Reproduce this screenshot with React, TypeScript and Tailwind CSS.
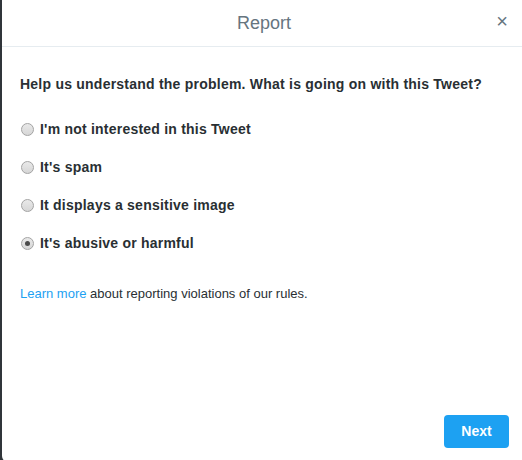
import { useState } from "react";

const options = [
  "I'm not interested in this Tweet",
  "It's spam",
  "It displays a sensitive image",
  "It's abusive or harmful",
];

function Radio({ checked }: { checked: boolean }) {
  return (
    <span className="flex h-[13px] w-[13px] shrink-0 items-center justify-center rounded-full border border-[#a3a3a3] bg-gradient-to-b from-[#e9e9e9] to-[#d6d6d6]">
      {checked && <span className="h-[5px] w-[5px] rounded-full bg-[#4a4a4a]" />}
    </span>
  );
}

export default function App() {
  const [selected, setSelected] = useState(3);

  return (
    <div className="h-[460px] w-[522px] overflow-hidden bg-[#30353a] pl-[2px] font-['Liberation_Sans',Arial,sans-serif]">
      <div className="-mt-2 flex h-[470px] w-[524px] flex-col rounded-md bg-white pt-2">
        <div className="relative flex h-[47px] shrink-0 items-center justify-center border-b border-[#e6ecf0]">
          <h2 className="text-[18px] text-[#66757f]">Report</h2>
          <button className="absolute right-[18px] top-[11px] text-[20px] leading-none text-[#66757f]">
            ×
          </button>
        </div>

        <div className="flex flex-1 flex-col pl-[18px] pr-[17px] pt-[27px]">
          <p className="text-[14px] font-bold tracking-[0.23px] text-[#292f33]">
            Help us understand the problem. What is going on with this Tweet?
          </p>

          <div className="mt-[25px] flex flex-col gap-[20px]">
            {options.map((o, i) => (
              <label
                key={o}
                onClick={() => setSelected(i)}
                className="flex h-[18px] cursor-pointer items-center gap-[6px] pl-[1px] text-[14px] font-bold tracking-[0.22px] text-[#292f33]"
              >
                <Radio checked={selected === i} />
                {o}
              </label>
            ))}
          </div>

          <p className="mt-[32px] text-[13px] text-[#292f33]">
            <a className="text-[#1da1f2]">Learn more</a> about reporting violations of our rules.
          </p>

          <div className="mt-auto mb-[14px] flex justify-end">
            <button className="h-[33px] w-[65px] rounded bg-[#1da1f2] text-[14px] font-bold text-white">
              Next
            </button>
          </div>
        </div>
      </div>
    </div>
  );
}
